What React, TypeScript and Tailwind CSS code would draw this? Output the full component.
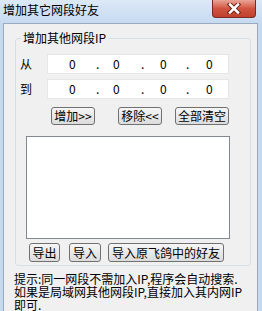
import React from "react";

const cjk = { fontFamily: '"Noto Sans CJK SC", "Liberation Sans", sans-serif' };

function IpField() {
  return (
    <div className="relative w-[182px] h-[20px] bg-white border border-[#e6e6e6] text-[12px] leading-[18px]">
      <span className="absolute left-[21px]">0</span>
      <span className="absolute left-[48px]">.</span>
      <span className="absolute left-[65px]">0</span>
      <span className="absolute left-[93px]">.</span>
      <span className="absolute left-[112px]">0</span>
      <span className="absolute left-[138px]">.</span>
      <span className="absolute left-[158px]">0</span>
    </div>
  );
}

function Btn({ label, w, h = "h-[18px]" }: { label: string; w: string; h?: string }) {
  return (
    <button
      className={`${w} ${h} flex items-center justify-center border border-[#707070] rounded-[3px] bg-gradient-to-b from-[#f6f6f6] to-[#dcdcdc] text-[12px] leading-none text-black`}
    >
      {label}
    </button>
  );
}

export default function App() {
  return (
    <div className="w-[262px] h-[311px] overflow-hidden bg-[#c5d9ef] flex flex-col text-black" style={cjk}>
      {/* title bar */}
      <div className="h-[23px] flex items-start bg-gradient-to-b from-[#dce9f7] to-[#c6daf0]">
        <span className="pl-[3px] pt-[2px] text-[12px] leading-[16px]">增加其它网段好友</span>
        <div className="ml-auto mr-[6px] w-[44px] h-[18px] rounded-b-[4px] border border-t-0 border-[#7a2a20] bg-gradient-to-b from-[#e9a496] via-[#d0543f] to-[#c0402c] flex items-center justify-center">
          <svg width="16" height="11" viewBox="0 0 16 11">
            <path d="M4 1.5 L12 9.5 M12 1.5 L4 9.5" stroke="#6b2218" strokeWidth="4.5" strokeLinecap="square" />
            <path d="M4 1.5 L12 9.5 M12 1.5 L4 9.5" stroke="#ffffff" strokeWidth="2.5" strokeLinecap="square" />
          </svg>
        </div>
      </div>

      {/* client area */}
      <div className="flex-1 ml-[3px] mr-[4px] bg-[#f0f0f0] border border-[#9aabbf] border-b-0 flex flex-col">
        <fieldset className="ml-[11px] mr-[6px] mt-[6px] border border-[#d5dfe5] rounded-[3px] pb-[3px]">
          <legend className="ml-[5px] px-[2px] text-[12px] leading-[16px]">增加其他网段IP</legend>

          <div className="flex items-center mt-[8px]">
            <span className="w-[31px] pl-[4px] text-[12px]">从</span>
            <IpField />
          </div>
          <div className="flex items-center mt-[5px]">
            <span className="w-[31px] pl-[4px] text-[12px]">到</span>
            <IpField />
          </div>

          <div className="flex items-center mt-[8px] pl-[35px]">
            <Btn label="增加>>" w="w-[44px]" />
            <div className="w-[23px]" />
            <Btn label="移除<<" w="w-[44px]" />
            <div className="w-[13px]" />
            <Btn label="全部清空" w="w-[54px]" />
          </div>

          <div className="ml-[10px] mt-[11px] w-[204px] h-[103px] bg-white border border-[#828790]" />

          <div className="flex items-center mt-[4px] pl-[13px]">
            <Btn label="导出" w="w-[31px]" h="h-[19px]" />
            <div className="w-[9px]" />
            <Btn label="导入" w="w-[32px]" h="h-[19px]" />
            <div className="w-[7px]" />
            <Btn label="导入原飞鸽中的好友" w="w-[116px]" h="h-[19px]" />
          </div>
        </fieldset>

        <p className="ml-[10px] mt-[6px] text-[12px] leading-[13px] whitespace-nowrap">
          提示:同一网段不需加入IP,程序会自动搜索.
          <br />
          如果是局域网其他网段IP,直接加入其内网IP
          <br />
          即可.
        </p>
      </div>
    </div>
  );
}
